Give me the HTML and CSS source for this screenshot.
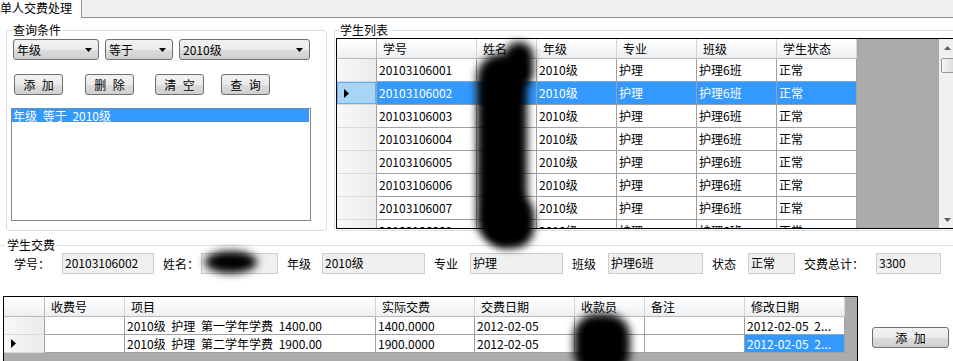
FILE: index.html
```html
<!DOCTYPE html>
<html lang="zh-CN">
<head>
    <meta charset="UTF-8">
    <meta name="viewport" content="width=device-width, initial-scale=1.0">
    <title>单人交费处理</title>
    <link rel="stylesheet" href="styles.css">
</head>
<body>

<div class="page">
    <div class="tabs">
        <div class="tab">单人交费处理</div>
        <div class="tab-rest"></div>
    </div>

    <div class="top">
        <fieldset class="group query">
            <legend>查询条件</legend>
            <div class="filters">
                <div class="combo combo-field"><span>年级</span><svg width="7" height="4"><path d="M0 0h7L3.5 4z"/></svg></div>
                <div class="combo combo-op"><span>等于</span><svg width="7" height="4"><path d="M0 0h7L3.5 4z"/></svg></div>
                <div class="combo combo-value"><span>2010级</span><svg width="7" height="4"><path d="M0 0h7L3.5 4z"/></svg></div>
            </div>
            <div class="actions">
                <button class="btn">添 加</button>
                <button class="btn">删 除</button>
                <button class="btn">清 空</button>
                <button class="btn">查 询</button>
            </div>
            <div class="listbox">
                <div class="list-item selected">年级 等于 2010级</div>
            </div>
        </fieldset>

        <fieldset class="group students">
            <legend>学生列表</legend>
            <div class="grid grid-students">
                <div class="grid-body">
                    <table>
                        <colgroup>
                            <col class="c40"><col class="c100"><col class="c60"><col class="c80"><col class="c80"><col class="c80"><col class="c80">
                        </colgroup>
                        <tr class="head">
                            <th class="corner"></th><th>学号</th><th>姓名</th><th>年级</th><th>专业</th><th>班级</th><th>学生状态</th>
                        </tr>
                        <tr><td class="rh"></td><td>20103106001</td><td></td><td>2010级</td><td>护理</td><td>护理6班</td><td>正常</td></tr>
                        <tr class="selected"><td class="rh current"><svg width="5" height="9"><path d="M0 0l5 4.5L0 9z"/></svg></td><td>20103106002</td><td></td><td>2010级</td><td>护理</td><td>护理6班</td><td>正常</td></tr>
                        <tr><td class="rh"></td><td>20103106003</td><td></td><td>2010级</td><td>护理</td><td>护理6班</td><td>正常</td></tr>
                        <tr><td class="rh"></td><td>20103106004</td><td></td><td>2010级</td><td>护理</td><td>护理6班</td><td>正常</td></tr>
                        <tr><td class="rh"></td><td>20103106005</td><td></td><td>2010级</td><td>护理</td><td>护理6班</td><td>正常</td></tr>
                        <tr><td class="rh"></td><td>20103106006</td><td></td><td>2010级</td><td>护理</td><td>护理6班</td><td>正常</td></tr>
                        <tr><td class="rh"></td><td>20103106007</td><td></td><td>2010级</td><td>护理</td><td>护理6班</td><td>正常</td></tr>
                        <tr><td class="rh"></td><td>20103106008</td><td></td><td>2010级</td><td>护理</td><td>护理6班</td><td>正常</td></tr>
                    </table>
                </div>
                <div class="vscroll">
                    <div class="sb-btn"><svg width="7" height="4"><path d="M3.5 0L7 4H0z"/></svg></div>
                    <div class="sb-track"><div class="sb-thumb"></div></div>
                    <div class="sb-btn"><svg width="7" height="4"><path d="M0 0h7L3.5 4z"/></svg></div>
                </div>
            </div>
        </fieldset>
    </div>

    <fieldset class="group fee">
        <legend>学生交费</legend>
        <div class="fields">
            <label class="lbl">学号：</label><div class="tb">20103106002</div>
            <label class="lbl">姓名：</label><div class="tb"></div>
            <label class="lbl">年级</label><div class="tb">2010级</div>
            <label class="lbl">专业</label><div class="tb">护理</div>
            <label class="lbl">班级</label><div class="tb">护理6班</div>
            <label class="lbl">状态</label><div class="tb">正常</div>
            <label class="lbl">交费总计：</label><div class="tb">3300</div>
        </div>
        <div class="fee-bottom">
            <div class="grid grid-fees">
                <table>
                    <colgroup>
                        <col class="c41"><col class="c80"><col class="c251"><col class="c99"><col class="c100"><col class="c70"><col class="c100"><col class="c100">
                    </colgroup>
                    <tr class="head">
                        <th class="corner"></th><th>收费号</th><th>项目</th><th>实际交费</th><th>交费日期</th><th>收款员</th><th>备注</th><th>修改日期</th>
                    </tr>
                    <tr><td class="rh"></td><td></td><td>2010级 护理 第一学年学费 1400.00</td><td>1400.0000</td><td>2012-02-05</td><td></td><td></td><td>2012-02-05 2...</td></tr>
                    <tr><td class="rh"><svg width="5" height="9"><path d="M0 0l5 4.5L0 9z"/></svg></td><td></td><td>2010级 护理 第二学年学费 1900.00</td><td>1900.0000</td><td>2012-02-05</td><td></td><td></td><td class="cell-selected">2012-02-05 2...</td></tr>
                </table>
            </div>
            <button class="btn btn-add">添 加</button>
        </div>
    </fieldset>

    <!-- blurred-out names -->
    <div class="smudge s1"></div>
    <div class="smudge s2"></div>
    <div class="smudge s3"></div>
    <div class="smudge s4"></div>
    <div class="smudge s5"></div>
</div>

</body>
</html>
```

FILE: styles.css
```css
* {
    box-sizing: border-box;
}

html, body {
    margin: 0;
    overflow: hidden;
}

body {
    background: #fff;
    font-family: "Noto Sans CJK SC", sans-serif;
    font-size: 12px;
    word-spacing: 3px;
    color: #000;
}

.page {
    position: relative;
    width: 953px;
    height: 361px;
    overflow: hidden;
}

/* tab strip */
.tabs {
    display: flex;
    height: 18px;
}

.tab {
    width: 82px;
    border-right: 1px solid #898c95;
    line-height: 15px;
    white-space: nowrap;
    background: #fff;
}

.tab-rest {
    flex: 1;
    background: #f0f0f0;
    border-bottom: 1px solid #898c95;
}

/* group boxes */
fieldset.group {
    margin: 0;
    min-width: 0;
    border: 1px solid #d5dfe5;
    border-radius: 3px;
}

fieldset.group legend {
    padding: 0 1px;
    line-height: 14px;
}

.top {
    display: flex;
    margin-top: 5px;
}

.query {
    flex-shrink: 0;
    width: 321px;
    margin-left: 6px !important;
    padding: 2px 0 9px 4px;
}

.query legend {
    margin-left: 1px;
}

.filters {
    display: flex;
    gap: 6px;
    padding-left: 2px;
}

.combo {
    display: flex;
    align-items: center;
    justify-content: space-between;
    height: 21px;
    padding: 0 6px 0 3px;
    border: 1px solid #707070;
    border-radius: 3px;
    background: linear-gradient(#f2f2f2 0%, #ebebeb 50%, #dddddd 51%, #cfcfcf 100%);
}

.combo-field { width: 86px; }
.combo-op { width: 68px; }
.combo-value { width: 131px; }

.actions {
    display: flex;
    margin-top: 14px;
    padding-left: 3px;
}

.actions .btn:nth-child(2) { margin-left: 22px; }
.actions .btn:nth-child(3) { margin-left: 21px; }
.actions .btn:nth-child(4) { margin-left: 17px; }

.btn {
    width: 49px;
    height: 21px;
    padding: 0;
    border: 1px solid #707070;
    border-radius: 3px;
    background: linear-gradient(#f2f2f2 0%, #ebebeb 50%, #dddddd 51%, #cfcfcf 100%);
    font: inherit;
    word-spacing: 4px;
    color: #000;
}

.listbox {
    width: 300px;
    height: 113px;
    margin-top: 13px;
    border: 1px solid #828790;
    background: #fff;
}

.list-item {
    height: 13px;
    line-height: 13px;
    padding-left: 1px;
    margin-right: 1px;
    white-space: nowrap;
}

.list-item.selected {
    background: #3399ff;
    color: #fff;
}

.students {
    flex-shrink: 0;
    width: 640px;
    margin-left: 7px !important;
    padding: 1px 0 1px 1px;
}

.students legend {
    margin-left: 3px;
}

/* data grids */
.grid {
    display: flex;
    align-items: flex-start;
    border: 1px solid #000;
    background: #ababab;
    overflow: hidden;
}

.grid-students {
    align-items: stretch;
    width: 621px;
    height: 191px;
}

.grid-body {
    width: 602px;
    overflow: hidden;
}

table {
    table-layout: fixed;
    border-collapse: separate;
    border-spacing: 0;
}

.grid-students table { width: 520px; }
.grid-fees table { width: 841px; }

col.c40 { width: 40px; }
col.c41 { width: 41px; }
col.c60 { width: 60px; }
col.c70 { width: 70px; }
col.c80 { width: 80px; }
col.c99 { width: 99px; }
col.c100 { width: 100px; }
col.c251 { width: 251px; }

th, td {
    padding: 0 0 0 2px;
    border-right: 1px solid #a0a0a0;
    border-bottom: 1px solid #a0a0a0;
    background: #fff;
    text-align: left;
    font-weight: normal;
    white-space: nowrap;
    overflow: hidden;
    line-height: 14px;
}

th {
    padding-left: 6px;
    border-right-color: #d5d5d5;
    border-bottom-color: #b9b9b9;
    background: linear-gradient(#ffffff 0%, #f7f8f9 50%, #eceef1 100%);
}

th.corner {
    border-right-color: #b9b9b9;
}

.grid-students tr { height: 23px; }
.grid-students tr.head { height: 20px; }
.grid-fees tr { height: 18px; }
.grid-fees tr.head { height: 20px; }

td.rh {
    padding: 0 0 0 7px;
    border-bottom-color: #d9d9d9;
    background: linear-gradient(to right, #f8f8f8, #ebebeb);
}

td.rh svg {
    display: block;
}

td.rh.current {
    background: #a6d5f5;
    box-shadow: inset 0 0 0 1px #6aafe0;
}

tr.selected td:not(.rh), td.cell-selected {
    background: #3399ff;
    color: #fff;
}

/* scrollbar */
.vscroll {
    display: flex;
    flex-direction: column;
    width: 17px;
    background: #f0f0f0;
}

.sb-btn {
    display: flex;
    align-items: center;
    justify-content: center;
    height: 17px;
}

.sb-btn svg {
    fill: #606060;
}

.sb-track {
    flex: 1;
    padding: 2px 0 0 2px;
}

.sb-thumb {
    width: 14px;
    height: 15px;
    border: 1px solid #979797;
    border-radius: 2px;
    background: linear-gradient(to right, #f6f6f6, #dcdcdc);
}

/* fee section */
.fee {
    margin-top: 7px !important;
    padding: 1px 0 0 3px;
    border-width: 1px 0 0 0 !important;
    border-radius: 0 !important;
}

.fee legend {
    margin-left: 2px;
    padding: 0 2px !important;
}

.fields {
    display: grid;
    grid-template-columns: 48px 92px 47px 77px 44px 103px 45px 93px 45px 95px 45px 47px 81px 65px;
    height: 21px;
    padding-left: 11px;
}

.lbl {
    line-height: 21px;
    white-space: nowrap;
}

.lbl:not(:first-child) {
    padding-left: 9px;
}

.tb {
    height: 21px;
    padding: 1px 2px 0;
    border: 1px solid #cdcdcd;
    background: #f0f0f0;
    line-height: 15px;
    white-space: nowrap;
    overflow: hidden;
}

.fee-bottom {
    display: flex;
    align-items: flex-start;
    margin-top: 22px;
}

.grid-fees {
    flex-shrink: 0;
    width: 855px;
    height: 70px;
}

.btn-add {
    flex-shrink: 0;
    width: 77px;
    margin-top: 31px;
    margin-left: 14px;
}

/* blurred names */
.smudge {
    position: absolute;
    background: #000;
    filter: blur(4px);
}

.s1 { left: 477px; top: 54px; width: 50px; height: 190px; border-radius: 24px; }
.s2 { left: 505px; top: 42px; width: 28px; height: 44px; border-radius: 14px; }
.s3 { left: 486px; top: 196px; width: 48px; height: 52px; border-radius: 20px; }
.s4 { left: 574px; top: 314px; width: 56px; height: 60px; border-radius: 22px; }
.s5 { left: 205px; top: 251px; width: 52px; height: 22px; border-radius: 50%; }
```
